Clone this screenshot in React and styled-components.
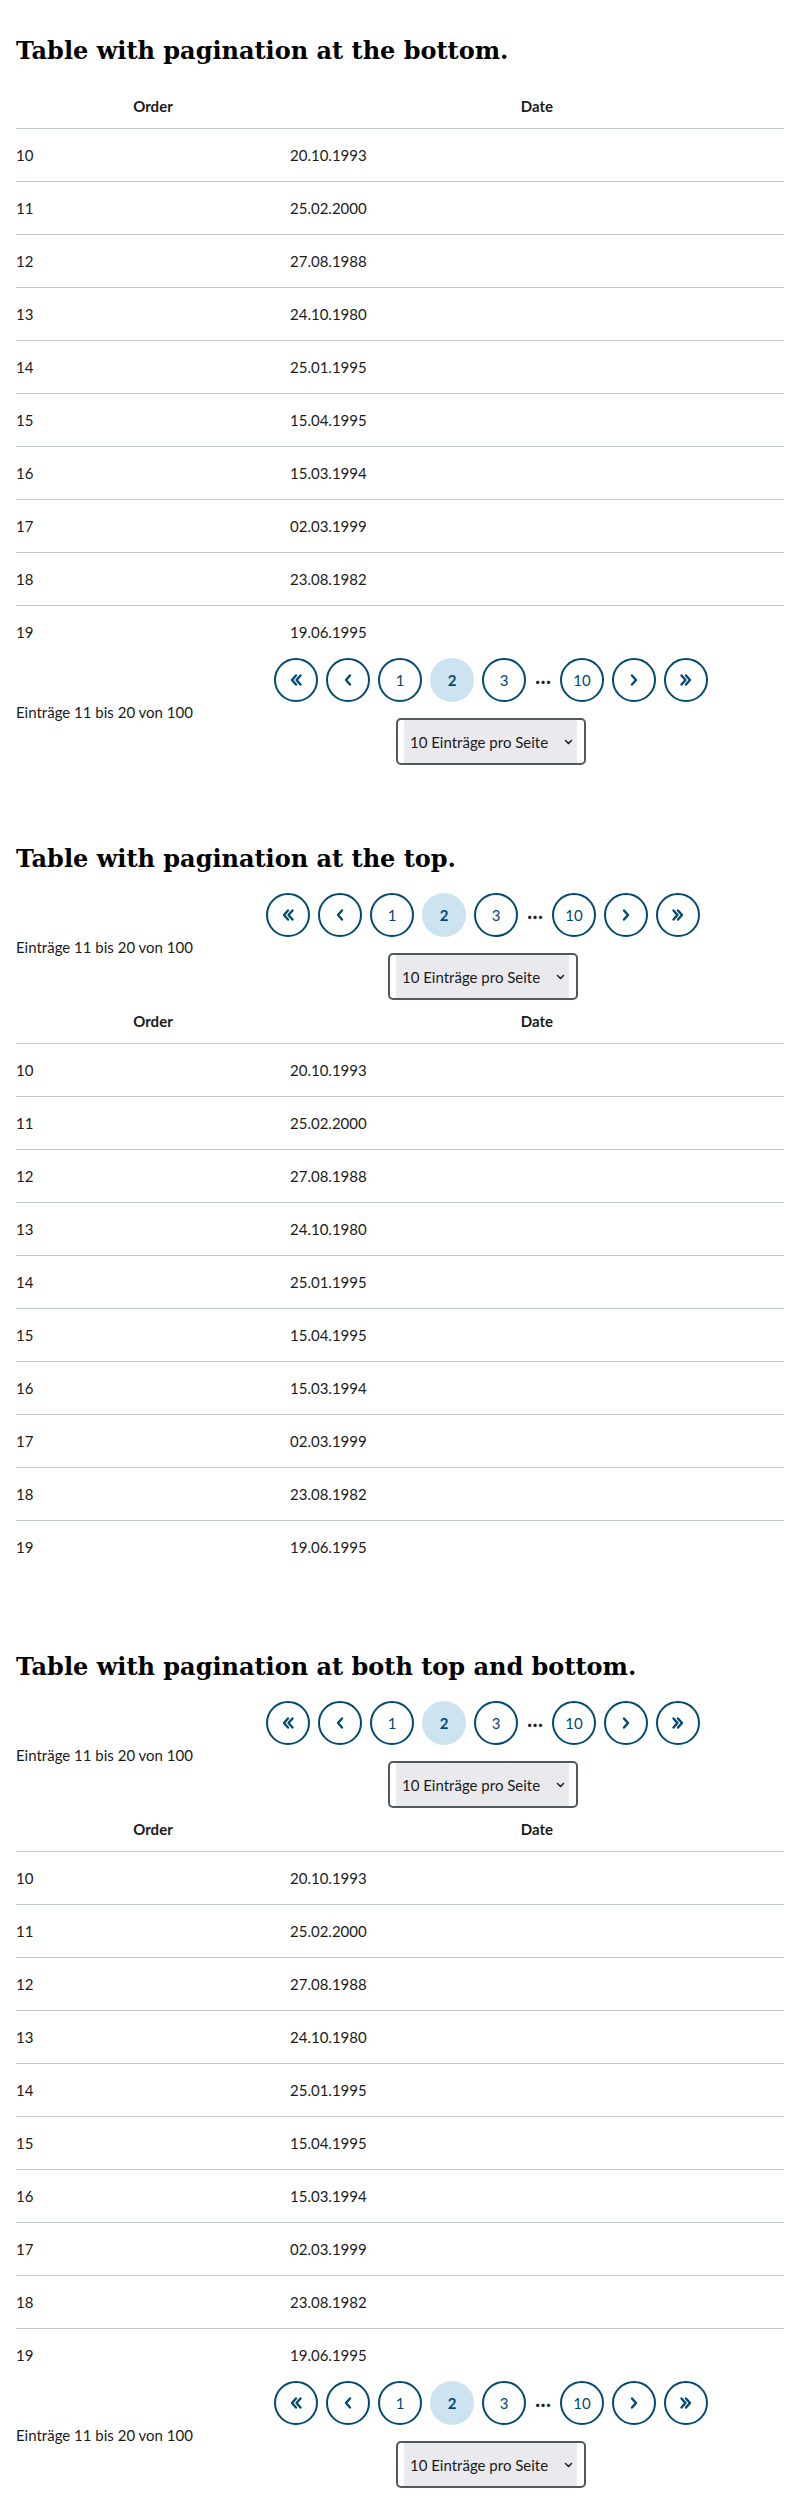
import React from 'react';
import styled, { createGlobalStyle } from 'styled-components';

const GlobalStyle = createGlobalStyle`
  body {
    margin: 0;
    background: #fff;
    color: #1b1b1b;
    font-family: Lato, 'Open Sans', sans-serif;
  }
`;

const Page = styled.div`
  padding: 16px;
`;

const Section = styled.section`
  padding-top: 21px;
  margin-bottom: 59px;

  &:last-child {
    margin-bottom: 0;
  }
`;

const Title = styled.h2`
  margin: 0 0 20px;
  font-family: 'DejaVu Serif', serif;
  font-size: 24px;
  font-weight: bold;
  line-height: 28px;
  color: #000;
`;

const Table = styled.table`
  width: 100%;
  border-collapse: collapse;
  font-size: 15px;
  line-height: 20px;
`;

const Th = styled.th`
  padding: 11px 0 12px;
  font-weight: 700;
  text-align: center;
  border-bottom: 1px solid #c5cacd;
`;

const Row = styled.tr`
  &:not(:last-child) td {
    border-bottom: 1px solid #c5cacd;
  }
`;

const Td = styled.td`
  padding: 16px 0;
  text-align: left;
`;

const Bar = styled.div`
  display: flex;
  align-items: center;
`;

const Info = styled.div`
  flex: 0 0 auto;
  font-size: 15px;
  line-height: 20px;
`;

const Controls = styled.div`
  display: flex;
  flex-direction: column;
  align-items: center;
  gap: 16px;
  margin-left: auto;
  margin-right: ${(p) => p.$right}px;
`;

const Pager = styled.nav`
  display: flex;
  align-items: center;
  gap: 8px;
`;

const PageButton = styled.button`
  box-sizing: border-box;
  width: 44px;
  height: 44px;
  padding: 0;
  border-radius: 50%;
  border: 2px solid ${(p) => (p.$active ? '#cde3ef' : '#004a72')};
  background: ${(p) => (p.$active ? '#cde3ef' : '#fff')};
  color: #004a72;
  font-family: Lato, sans-serif;
  font-size: 15px;
  font-weight: ${(p) => (p.$active ? 700 : 400)};
  display: flex;
  align-items: center;
  justify-content: center;
  cursor: pointer;
`;

const Dots = styled.span`
  width: 18px;
  height: 44px;
  display: flex;
  align-items: center;
  justify-content: center;
  padding-bottom: 9px;
  box-sizing: border-box;
  font-size: 20px;
  font-weight: 900;
  color: #1b1b1b;
`;

const SelectFrame = styled.div`
  box-sizing: border-box;
  height: 47px;
  padding: 0 7px 0 6px;
  border: 2px solid #4f595d;
  border-radius: 5px;
  display: flex;
`;

const SelectWrap = styled.div`
  position: relative;
  display: flex;
`;

const Select = styled.select`
  appearance: none;
  height: 100%;
  margin: 0;
  padding: 0 28px 0 6px;
  border: none;
  border-radius: 0;
  background: #e9e9ee;
  color: #1b1b1b;
  font-family: Lato, sans-serif;
  font-size: 15px;
  outline: none;
`;

const Caret = styled.svg`
  position: absolute;
  right: 4px;
  top: 50%;
  margin-top: -4px;
  pointer-events: none;
`;

const rows = [
  [10, '20.10.1993'],
  [11, '25.02.2000'],
  [12, '27.08.1988'],
  [13, '24.10.1980'],
  [14, '25.01.1995'],
  [15, '15.04.1995'],
  [16, '15.03.1994'],
  [17, '02.03.1999'],
  [18, '23.08.1982'],
  [19, '19.06.1995'],
];

const Chevron = ({ double, flip }) => (
  <svg width="16" height="16" viewBox="0 0 16 16" fill="none" stroke="#004a72"
    strokeWidth="2.4" strokeLinecap="round" strokeLinejoin="round"
    style={flip ? { transform: 'scaleX(-1)' } : undefined}>
    {double ? (
      <>
        <path d="M8 3.5 4 8l4 4.5" />
        <path d="M12.5 3.5 8.5 8l4 4.5" />
      </>
    ) : (
      <path d="M10 3.5 6 8l4 4.5" />
    )}
  </svg>
);

const Pagination = ({ right }) => (
  <Bar>
    <Info>Einträge 11 bis 20 von 100</Info>
    <Controls $right={right}>
      <Pager>
        <PageButton aria-label="Erste Seite"><Chevron double /></PageButton>
        <PageButton aria-label="Vorherige Seite"><Chevron /></PageButton>
        <PageButton>1</PageButton>
        <PageButton $active>2</PageButton>
        <PageButton>3</PageButton>
        <Dots>…</Dots>
        <PageButton>10</PageButton>
        <PageButton aria-label="Nächste Seite"><Chevron flip /></PageButton>
        <PageButton aria-label="Letzte Seite"><Chevron double flip /></PageButton>
      </Pager>
      <SelectFrame>
        <SelectWrap>
          <Select defaultValue="10">
            <option value="10">10 Einträge pro Seite</option>
          </Select>
          <Caret width="9" height="8" viewBox="0 0 9 8" fill="none" stroke="#1b1b1b"
            strokeWidth="1.5" strokeLinecap="round" strokeLinejoin="round">
            <path d="M1.5 2.5 4.5 5.5 7.5 2.5" />
          </Caret>
        </SelectWrap>
      </SelectFrame>
    </Controls>
  </Bar>
);

const DataTable = () => (
  <Table>
    <colgroup>
      <col style={{ width: '274px' }} />
      <col />
    </colgroup>
    <thead>
      <tr>
        <Th>Order</Th>
        <Th>Date</Th>
      </tr>
    </thead>
    <tbody>
      {rows.map(([order, date]) => (
        <Row key={order}>
          <Td>{order}</Td>
          <Td>{date}</Td>
        </Row>
      ))}
    </tbody>
  </Table>
);

const App = () => (
  <Page>
    <GlobalStyle />
    <Section>
      <Title>Table with pagination at the bottom.</Title>
      <DataTable />
      <Pagination right={76} />
    </Section>
    <Section>
      <Title>Table with pagination at the top.</Title>
      <Pagination right={84} />
      <DataTable />
    </Section>
    <Section>
      <Title>Table with pagination at both top and bottom.</Title>
      <Pagination right={84} />
      <DataTable />
      <Pagination right={76} />
    </Section>
  </Page>
);

export default App;
